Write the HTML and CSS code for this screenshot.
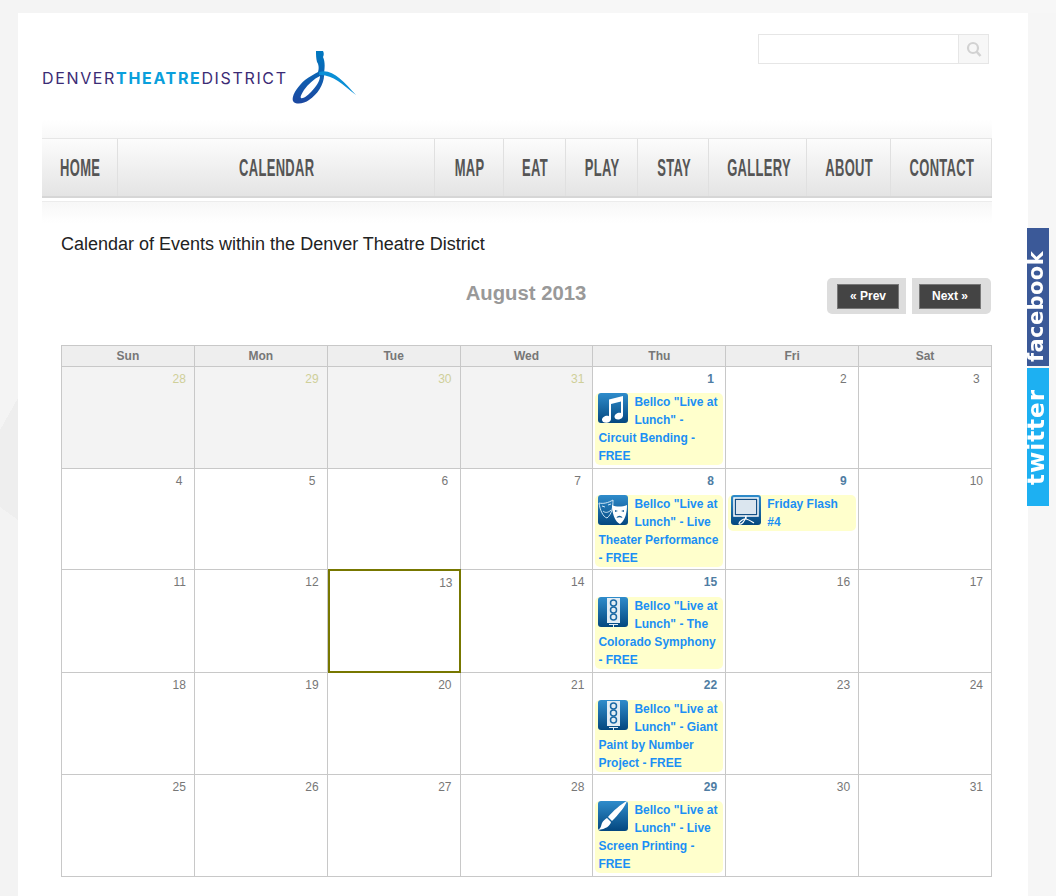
FILE: index.html
```html
<!DOCTYPE html>
<html lang="en">
<head>
  <meta charset="UTF-8" />
  <title>Calendar of Events - Denver Theatre District</title>
  <link rel="stylesheet" href="styles.css">
</head>
<body>
  <svg class="defs" width="0" height="0" aria-hidden="true">
    <defs>
      <linearGradient id="tile" x1="0" y1="0" x2="0" y2="1">
        <stop offset="0" stop-color="#2f8ccb" />
        <stop offset="1" stop-color="#04477f" />
      </linearGradient>
      <linearGradient id="swoosh" x1="0" y1="0" x2="0" y2="1">
        <stop offset="0" stop-color="#0079c1" />
        <stop offset="1" stop-color="#1c47a0" />
      </linearGradient>
      <symbol id="i-music" viewBox="0 0 30 30">
        <rect width="30" height="30" rx="3" fill="url(#tile)" />
        <path fill="#fff" d="M11 6.5 25 3v19.5c0 2.4-2.500 4-5 4-2.200 0-3.500-1.200-3.500-2.800 0-2.300 2.500-4 4.800-4 .7 0 1.300.1 1.700.3V8.500L13 11v15c0 2.300-2.500 3.800-4.900 3.800C5.800 29.800 4 28.500 4 26.800c0-2.300 2.700-4 5-4 .8 0 1.500.1 2 .4Z" />
      </symbol>
      <symbol id="i-masks" viewBox="0 0 30 30">
        <rect width="30" height="30" rx="3" fill="url(#tile)" />
        <path fill="none" stroke="#cfe6f5" stroke-width="1" d="M1 8c4 1 9 0 14-3 0 7-1 14-6 18-4-1-7-8-8-15Z" />
        <path fill="none" stroke="#cfe6f5" stroke-width="1" d="M4 11l3 1M10 10l3-1M5 16c2 2 5 2 8-1" />
        <path fill="#fff" d="M14 10c4 2 10 2 15 0 0 8-2 16-7 19-5-2-8-11-8-19Z" />
        <path fill="#1a5f96" d="M17 15l3 1-3 1ZM26 15l-3 1 3 1ZM18.500 23c1-3 5-3 6 0-2-1-4-1-6 0Z" />
      </symbol>
      <symbol id="i-screen" viewBox="0 0 30 30">
        <rect width="30" height="30" rx="3" fill="url(#tile)" />
        <rect x="3" y="3" width="24" height="18" fill="#134f85" stroke="#fff" stroke-width="1.500" />
        <rect x="5" y="5" width="20" height="14" fill="#dbe6ef" />
        <path fill="none" stroke="#fff" stroke-width="1.200" d="M15 21v3M15 24c3 .5 5 2 8 4M15 24c-3-.5-7 3-7 4.500 0 1 2 1 4-1 2-2 3-4 3-7" />
      </symbol>
      <symbol id="i-signal" viewBox="0 0 30 30">
        <rect width="30" height="30" rx="3" fill="url(#tile)" />
        <rect x="9" y="1" width="13" height="25" fill="#e4edf4" />
        <g fill="none" stroke="#1d6aa6" stroke-width="1.500">
          <circle cx="15.500" cy="6" r="3" />
          <circle cx="15.500" cy="13" r="3" />
          <circle cx="15.500" cy="20" r="3" />
        </g>
        <path fill="#e4edf4" d="M11 27h9v1h-4v2h-1v-2h-4Z" />
      </symbol>
      <symbol id="i-brush" viewBox="0 0 30 30">
        <rect width="30" height="30" rx="3" fill="url(#tile)" />
        <path fill="#fff" d="M29 0c-2 6-9 14-15 20l-4-4C15 10 23 3 29 0ZM9 17l4 4c-1 4-5 7-13 8 3-2 3-4 4-7 1-2 3-4 5-5Z" />
      </symbol>
    </defs>
  </svg>

  <div class="page">
    <header class="top">
      <a class="logo" href="#">
        <span class="logo-text">DENVER<b>THEATRE</b>DISTRICT</span>
        <svg class="logo-mark" viewBox="0 0 64 53" width="64" height="53">
          <path fill="url(#swoosh)" d="M24 0h7c1 2 1 4 0 6 2 4 2 10 1 16 1 10-6 21-15 27-5 4-14 5-16 1-2-5 5-15 12-21 4-3 9-6 13-8 1-3 1-7-1-10-1-4-1-7-1-11Zm4 25c-6 3-12 8-16 14-3 5-4 7-3 8 2 1 6-2 10-6 5-5 9-11 9-16Z" />
          <path fill="#0a8fd6" d="M27 21c13-4 24 9 37 23-14-11-24-21-37-20Z" />
        </svg>
      </a>
      <form class="search">
        <input class="search-input" type="text">
        <button class="search-btn" type="button">
          <svg viewBox="0 0 16 16" width="16" height="16">
            <circle cx="7" cy="7" r="5" fill="none" stroke="#d2d2d2" stroke-width="2.200" />
            <path d="M10.500 10.500 14.500 15" stroke="#d2d2d2" stroke-width="2.600" />
          </svg>
        </button>
      </form>
    </header>

    <nav class="nav">
      <a href="#"><span>HOME</span></a>
      <a href="#"><span>CALENDAR</span></a>
      <a href="#"><span>MAP</span></a>
      <a href="#"><span>EAT</span></a>
      <a href="#"><span>PLAY</span></a>
      <a href="#"><span>STAY</span></a>
      <a href="#"><span>GALLERY</span></a>
      <a href="#"><span>ABOUT</span></a>
      <a href="#"><span>CONTACT</span></a>
    </nav>
    <div class="nav-shade"></div>

    <main class="content">
      <h1 class="title">Calendar of Events within the Denver Theatre District</h1>

      <div class="month-bar">
        <h2 class="month">August 2013</h2>
        <div class="pager">
          <span class="pager-wrap prev"><a class="pager-btn" href="#">« Prev</a></span>
          <span class="pager-wrap next"><a class="pager-btn" href="#">Next »</a></span>
        </div>
      </div>

      <table class="cal">
        <thead>
          <tr><th>Sun</th><th>Mon</th><th>Tue</th><th>Wed</th><th>Thu</th><th>Fri</th><th>Sat</th></tr>
        </thead>
        <tbody>
          <tr>
            <td class="other"><div class="num">28</div></td>
            <td class="other"><div class="num">29</div></td>
            <td class="other"><div class="num">30</div></td>
            <td class="other"><div class="num">31</div></td>
            <td class="has">
              <div class="num">1&nbsp;</div>
              <a class="event" href="#"><svg class="ico"><use href="#i-music" /></svg>Bellco "Live at Lunch" - Circuit Bending - FREE</a>
            </td>
            <td><div class="num">2&nbsp;</div></td>
            <td><div class="num">3&nbsp;</div></td>
          </tr>
          <tr class="row-short">
            <td><div class="num">4&nbsp;</div></td>
            <td><div class="num">5&nbsp;</div></td>
            <td><div class="num">6&nbsp;</div></td>
            <td><div class="num">7&nbsp;</div></td>
            <td class="has">
              <div class="num">8&nbsp;</div>
              <a class="event" href="#"><svg class="ico"><use href="#i-masks" /></svg>Bellco "Live at Lunch" - Live Theater Performance - FREE</a>
            </td>
            <td class="has">
              <div class="num">9&nbsp;</div>
              <a class="event" href="#"><svg class="ico"><use href="#i-screen" /></svg>Friday Flash #4</a>
            </td>
            <td><div class="num">10</div></td>
          </tr>
          <tr class="row-tall row-low">
            <td><div class="num">11</div></td>
            <td><div class="num">12</div></td>
            <td class="today"><div class="num">13</div></td>
            <td><div class="num">14</div></td>
            <td class="has">
              <div class="num">15</div>
              <a class="event" href="#"><svg class="ico"><use href="#i-signal" /></svg>Bellco "Live at Lunch" - The Colorado Symphony - FREE</a>
            </td>
            <td><div class="num">16</div></td>
            <td><div class="num">17</div></td>
          </tr>
          <tr class="row-low">
            <td><div class="num">18</div></td>
            <td><div class="num">19</div></td>
            <td><div class="num">20</div></td>
            <td><div class="num">21</div></td>
            <td class="has">
              <div class="num">22</div>
              <a class="event" href="#"><svg class="ico"><use href="#i-signal" /></svg>Bellco "Live at Lunch" - Giant Paint by Number Project - FREE</a>
            </td>
            <td><div class="num">23</div></td>
            <td><div class="num">24</div></td>
          </tr>
          <tr>
            <td><div class="num">25</div></td>
            <td><div class="num">26</div></td>
            <td><div class="num">27</div></td>
            <td><div class="num">28</div></td>
            <td class="has">
              <div class="num">29</div>
              <a class="event" href="#"><svg class="ico"><use href="#i-brush" /></svg>Bellco "Live at Lunch" - Live Screen Printing - FREE</a>
            </td>
            <td><div class="num">30</div></td>
            <td><div class="num">31</div></td>
          </tr>
        </tbody>
      </table>
    </main>
  </div>

  <div class="social">
    <a class="social-tab fb" href="#"><span>facebook</span></a>
    <a class="social-tab tw" href="#"><span>twitter</span></a>
  </div>
</body>
</html>
```

FILE: styles.css
```css
* { box-sizing: border-box; margin: 0; padding: 0; }
html, body { height: 896px; overflow: hidden; }
body {
  font-family: 'Liberation Sans', Arial, sans-serif;
  background:
    linear-gradient(90deg, #f4f4f4 0 500px, #f7f7f7 500px) left top / 100% 13px no-repeat,
    linear-gradient(to bottom right, #f4f4f4 50%, #eee 50%) 0 398px / 18px 32px no-repeat,
    linear-gradient(to top right, #f3f3f3 50%, #eee 50%) 0 507px / 18px 13px no-repeat,
    linear-gradient(#f4f4f4 0 398px, #eee 398px 510px, #f3f3f3 510px) left top / 18px 896px no-repeat,
    #f6f6f6;
}
a { text-decoration: none; }
.defs { position: absolute; }

.page {
  width: 1010px; height: 883px;
  margin: 13px 0 0 18px;
  background: #fff;
}

/* header */
.top {
  height: 125px;
  padding: 21px 39px 0 24px;
  display: flex; justify-content: space-between; align-items: flex-start;
  background: linear-gradient(#fff, #f8f8f8) 24px 100% / 950px 18px no-repeat;
}
.logo { display: flex; align-items: flex-start; margin-top: 17px; }
.logo-text {
  font-family: 'Inter', sans-serif; font-size: 16px; line-height: 20px;
  letter-spacing: 1.650px; color: #3b2b75; margin-top: 17px;
}
.logo-text b { color: #0a9fdc; font-weight: 700; }
.logo-mark { margin-left: 4px; }

.search { display: flex; width: 231px; height: 30px; border: 1px solid #e6e6e6; }
.search-input { flex: 1; min-width: 0; border: none; background: #fff; }
.search-btn {
  width: 30px; border: none; border-left: 1px solid #e6e6e6;
  background: #f7f7f7;
  display: flex; align-items: center; justify-content: center;
}

/* nav */
.nav {
  display: grid;
  grid-template-columns: 76px 317px 69px 62px 72px 71px 98px 84px 101px;
  width: 950px; height: 60px;
  margin-left: 24px;
  border-top: 1px solid #e6e6e6;
  border-bottom: 2px solid #d6d6d6;
  background: linear-gradient(#fcfcfc, #e4e4e4);
}
.nav a {
  display: flex; align-items: center; justify-content: center;
  padding-left: 2px;
  border-right: 1px solid #e0e0e0;
  font-weight: 700; font-size: 24px; letter-spacing: .6px;
  color: #555;
}
/* no condensed face is installed, so squeeze the bold one */
.nav span { display: block; transform: scaleX(.54); white-space: nowrap; }
.nav-shade {
  width: 950px; height: 22px;
  margin: 3px 0 0 24px;
  border-top: 1px solid #ececec;
  background: linear-gradient(#f7f7f7, #fff);
}

/* calendar */
.content { padding: 0 37px 0 43px; }
.title { font-size: 18px; font-weight: 400; line-height: 20px; color: #222; margin-top: 11px; }

.month-bar { position: relative; height: 36px; margin-top: 24px; text-align: center; }
.month { font-size: 20.300px; line-height: 30px; color: #999; }
.pager { position: absolute; right: 0; top: 0; display: flex; gap: 6px; }
.pager-wrap { display: block; width: 79px; height: 36px; background: #ddd; padding-top: 6px; }
.prev { border-radius: 5px 0 0 5px; padding-left: 10px; }
.next { border-radius: 0 5px 5px 0; padding-left: 7px; }
.pager-btn {
  display: block; width: 62px; height: 25px;
  background: #444; border: 1px solid #777;
  color: #fff; font-size: 12px; font-weight: 700; line-height: 23px; text-align: center;
}

.cal {
  width: 931px; margin-top: 31px;
  border-collapse: collapse; table-layout: fixed;
  font-size: 12px;
}
.cal th, .cal td { border: 1px solid #c8c8c8; }
.cal th { height: 21px; background: #eee; color: #777; font-weight: 700; }
.cal td { height: 102px; padding: 2px; vertical-align: top; }
.cal .row-short td { height: 101px; }
.cal .row-tall td { height: 103px; }
.other { background: #f3f3f3; }
.today { position: relative; }
.today::after {
  content: ""; position: absolute;
  top: -1px; left: 0; right: -1px; bottom: -1px;
  border: 2px solid #777700;
}
.num {
  line-height: 18px; padding: 1px 6px 0 0; margin-bottom: 5px;
  text-align: right; color: #777;
}
.row-low .num { margin-bottom: 6px; }
.today .num { padding: 2px 5px 0 0; margin-bottom: 0; }
.other .num { color: #cfcf99; }
.has .num { color: #4f7da3; font-weight: 700; }

.event {
  display: block; overflow: hidden;
  padding: 0 4px 0 3px;
  background: #ffc; border-radius: 5px;
  color: #1b8ff5; font-weight: 700; line-height: 18px;
}
.ico { float: left; width: 30px; height: 30px; margin-right: 6px; }

/* side tabs */
.social { position: fixed; left: 1027px; top: 228px; display: flex; flex-direction: column; gap: 2px; }
.social-tab {
  display: block;
  width: 22px; height: 138px;
  color: #fff; font-family: 'DejaVu Sans', sans-serif; font-weight: 700;
  writing-mode: vertical-rl; transform: rotate(180deg);
  text-align: center; line-height: 18px;
}
.fb { background: #3b5998; font-size: 21px; letter-spacing: .4px; text-align: left; padding-top: 4px; }
.tw { background: #1db0f2; font-size: 23px; letter-spacing: 1px; }
```
